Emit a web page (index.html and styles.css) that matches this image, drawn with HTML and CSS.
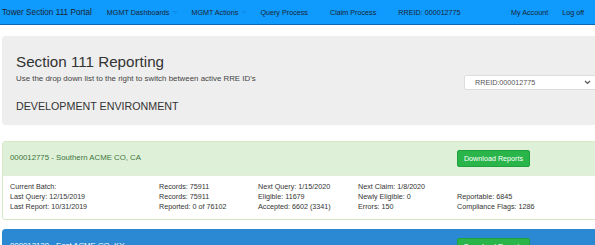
FILE: index.html
```html
<!DOCTYPE html>
<html lang="en">
<head>
    <meta charset="UTF-8">
    <title>Section 111 Reporting</title>
    <link rel="stylesheet" href="styles.css">
</head>
<body>
    <nav class="navbar">
        <a class="brand" href="#">Tower Section 111 Portal</a>
        <ul class="nav-left">
            <li><a href="#">MGMT Dashboards<span class="caret"></span></a></li>
            <li><a href="#">MGMT Actions<span class="caret"></span></a></li>
            <li><a href="#">Query Process</a></li>
            <li><a href="#">Claim Process</a></li>
            <li><a href="#">RREID: 000012775</a></li>
        </ul>
        <ul class="nav-right">
            <li><a href="#">My Account</a></li>
            <li><a href="#">Log off</a></li>
        </ul>
    </nav>

    <div class="page">
        <div class="jumbotron">
            <div class="intro">
                <h2>Section 111 Reporting</h2>
                <p>Use the drop down list to the right to switch between active RRE ID's</p>
                <h4>DEVELOPMENT ENVIRONMENT</h4>
            </div>
            <div class="rre-select">
                <span>RREID:000012775</span>
                <svg width="7" height="5" viewBox="0 0 7 5"><path d="M1 1 L3.5 3.5 L6 1" fill="none" stroke="#555" stroke-width="1.2"/></svg>
            </div>
        </div>

        <div class="panel panel-success">
            <div class="panel-heading">
                <div class="panel-title">000012775 - Southern ACME CO, CA</div>
                <button class="btn">Download Reports</button>
            </div>
            <div class="panel-body">
                <div>Current Batch:<br>Last Query: 12/15/2019<br>Last Report: 10/31/2019</div>
                <div>Records: 75911<br>Records: 75911<br>Reported: 0 of 76102</div>
                <div>Next Query: 1/15/2020<br>Eligible: 11679<br>Accepted: 6602 (3341)</div>
                <div>Next Claim: 1/8/2020<br>Newly Eligible: 0<br>Errors: 150</div>
                <div>&nbsp;<br>Reportable: 6845<br>Compliance Flags: 1286</div>
            </div>
        </div>

        <div class="panel panel-primary">
            <div class="panel-heading">
                <div class="panel-title">000013130 - East ACME CO, KY</div>
                <button class="btn">Download Reports</button>
            </div>
        </div>
    </div>
</body>
</html>
```

FILE: styles.css
```css
/* ===== General ===== */
body {
    margin: 0;
    font-family: "Liberation Sans", Arial, sans-serif;
    color: #333;
    background: #fff;
    overflow: hidden;
}

a {
    color: inherit;
    text-decoration: none;
}

ul {
    list-style: none;
    margin: 0;
    padding: 0;
}

/* ===== Navbar ===== */
.navbar {
    display: flex;
    align-items: center;
    height: 24px;
    background: #0f9bfd;
    border-bottom: 1px solid #0b67b3;
    color: #1a2433;
}

.brand {
    font-size: 8.2px;
    margin-left: 2px;
    margin-right: 15px;
}

.nav-left,
.nav-right {
    display: flex;
    font-size: 7.2px;
}

.nav-left {
    gap: 22px;
}

.nav-right {
    margin-left: auto;
    margin-right: 11px;
    gap: 14px;
}

.caret {
    display: inline-block;
    width: 0;
    height: 0;
    margin-left: 3px;
    margin-right: -9px;
    vertical-align: middle;
    border-top: 3px solid rgba(0, 0, 0, 0.07);
    border-left: 3px solid transparent;
    border-right: 3px solid transparent;
}

/* ===== Page ===== */
.page {
    width: 610px;
    padding-left: 2px;
}

.jumbotron {
    display: flex;
    justify-content: space-between;
    margin-top: 11px;
    padding: 18px 15px 13px 14px;
    background: #eee;
    border-radius: 4px;
}

.intro h2 {
    margin: 0;
    font-size: 15.2px;
    font-weight: normal;
    line-height: 16px;
}

.intro p {
    margin: 4px 0 0;
    font-size: 7.9px;
    line-height: 10px;
    color: #444;
}

.intro h4 {
    margin: 16px 0 0;
    font-size: 10.7px;
    font-weight: normal;
    line-height: 12px;
}

.rre-select {
    display: flex;
    align-items: center;
    justify-content: space-between;
    align-self: flex-start;
    box-sizing: border-box;
    width: 133px;
    height: 15px;
    margin-top: 21px;
    padding: 0 5px 0 10px;
    background: #fff;
    border: 1px solid #ddd;
    border-radius: 2px;
    font-size: 7.2px;
    color: #555;
}

/* ===== Panels ===== */
.panel {
    margin-top: 16px;
    border: 1px solid #e2e2e2;
    border-radius: 3px;
}

.panel + .panel {
    margin-top: 9px;
}

.panel-heading,
.panel-body {
    display: grid;
    grid-template-columns: 149px 99px 100px 99px 1fr;
    padding-left: 7px;
}

.panel-heading {
    height: 33px;
    align-items: center;
}

.panel-title {
    grid-column: 1 / 5;
    font-size: 7.8px;
    margin-top: -2px;
}

.panel-success {
    border-color: #d6e9c6;
}

.panel-success .panel-heading {
    background: #dff0d8;
    color: #3c763d;
}

.panel-primary {
    border-color: #2a88d0;
}

.panel-primary .panel-heading {
    background: #2a89d2;
    color: #fff;
}

.panel-body {
    padding-top: 6px;
    padding-bottom: 7px;
    font-size: 7.2px;
    line-height: 10px;
    border-top: 1px solid #e3efdc;
}

.btn {
    justify-self: start;
    width: 73px;
    height: 17px;
    padding: 0;
    font-family: inherit;
    font-size: 7.2px;
    color: #fff;
    background: #2ab54b;
    border: 1px solid #22a040;
    border-radius: 2px;
    cursor: pointer;
}
```
